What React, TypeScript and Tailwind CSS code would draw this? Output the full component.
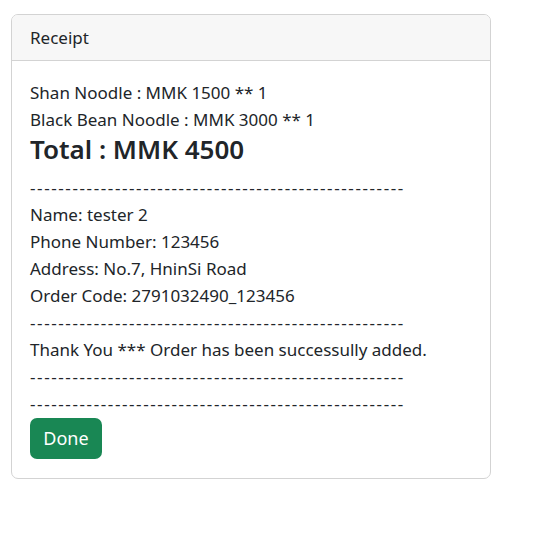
export default function App() {
  const dashes = "-".repeat(53);
  return (
    <div className="min-h-screen bg-white pt-[14px] pl-[11px] font-['Noto_Sans',sans-serif] text-[17px] leading-[27px] text-[#212529]">
      <div className="w-[480px] rounded-[7px] border border-[#d3d3d3] bg-white">
        <div className="rounded-t-[6px] border-b border-[#d3d3d3] bg-[#f7f7f7] px-[18px] py-[9px] leading-[27px]">
          Receipt
        </div>
        <div className="px-[18px] pt-[18px] pb-[19px]">
          <p>Shan Noodle : MMK 1500 ** 1</p>
          <p>Black Bean Noodle : MMK 3000 ** 1</p>
          <h4 className="mb-[9px] text-[26px] font-semibold leading-[32px]">Total : MMK 4500</h4>
          <p className="tracking-[1.6px]">{dashes}</p>
          <p>Name: tester 2</p>
          <p>Phone Number: 123456</p>
          <p>Address: No.7, HninSi Road</p>
          <p>Order Code: 2791032490_123456</p>
          <p className="tracking-[1.6px]">{dashes}</p>
          <p>Thank You *** Order has been successully added.</p>
          <p className="tracking-[1.6px]">{dashes}</p>
          <p className="tracking-[1.6px]">{dashes}</p>
          <button className="mt-[1px] block h-[41px] w-[72px] rounded-[7px] bg-[#198754] text-[18px] text-white">
            Done
          </button>
        </div>
      </div>
    </div>
  );
}
